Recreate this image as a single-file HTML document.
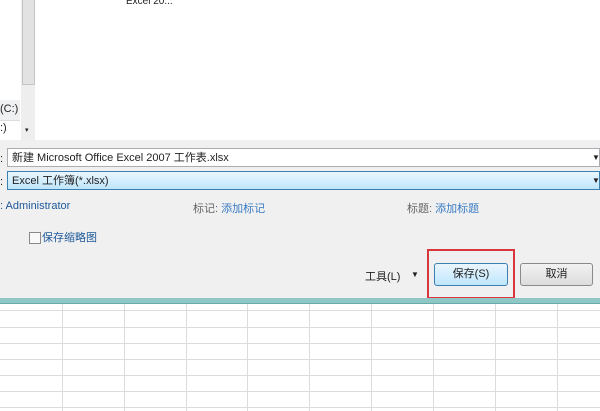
<!DOCTYPE html>
<html><head><meta charset="utf-8"><style>
body{margin:0;width:600px;height:411px;overflow:hidden;position:relative;background:#fff;font-family:"Liberation Sans","Noto Sans CJK SC",sans-serif;font-size:11px;color:#222}
.a{position:absolute}
</style></head><body>
<div class="a" style="left:0;top:0;width:22px;height:140px;background:#fff"></div>
<div class="a" style="left:0;top:100px;width:20px;height:20px;background:#eef0f2;border-bottom:1px solid #ddd"></div>
<div class="a" style="left:0;top:103px;font-size:11px">(C:)</div>
<div class="a" style="left:0;top:122px;font-size:11px">:)</div>
<div class="a" style="left:21px;top:0;width:14px;height:140px;background:#eeeeee"></div>
<div class="a" style="left:22px;top:0;width:11px;height:84px;background:#e2e2e2;border:1px solid #c4c4c4;border-top:none"></div>
<div class="a" style="left:25px;top:126px;font-size:7px">▾</div>
<div class="a" style="left:126px;top:-4px;font-size:10px">Excel 20...</div>
<div class="a" style="left:0;top:140px;width:600px;height:158px;background:#f0f0f0"></div>
<div class="a" style="left:0;top:153px">:</div>
<div class="a" style="left:7px;top:148px;width:593px;height:19px;background:#fff;border:1px solid #abadb3;box-sizing:border-box;padding:3px 4px 0;font-size:11px;line-height:13px">新建 Microsoft Office Excel 2007 工作表.xlsx</div>
<div class="a" style="left:592px;top:153px;font-size:8px">▼</div>
<div class="a" style="left:0;top:176px">:</div>
<div class="a" style="left:7px;top:171px;width:593px;height:19px;background:linear-gradient(#eaf6fd,#bee6fd);border:1px solid #3c7fb1;box-sizing:border-box;padding:3px 4px 0;font-size:11px;line-height:13px">Excel 工作簿(*.xlsx)</div>
<div class="a" style="left:592px;top:176px;font-size:8px">▼</div>
<div class="a" style="left:0;top:200px;color:#1e5a9a">: Administrator</div>
<div class="a" style="left:193px;top:200px;color:#666">标记: <span style="color:#3a7cc4">添加标记</span></div>
<div class="a" style="left:407px;top:200px;color:#666">标题: <span style="color:#3a7cc4">添加标题</span></div>
<div class="a" style="left:29px;top:232px;width:10px;height:10px;border:1px solid #888;background:#f8f8f8"></div>
<div class="a" style="left:42px;top:229px;color:#1e5a9a">保存缩略图</div>
<div class="a" style="left:365px;top:268px">工具(L)</div>
<div class="a" style="left:411px;top:270px;font-size:8px">▼</div>
<div class="a" style="left:427px;top:249px;width:88px;height:50px;border:2px solid #d9363e;box-sizing:border-box"></div>
<div class="a" style="left:434px;top:263px;width:74px;height:23px;border:1px solid #3c7fb1;border-radius:3px;background:linear-gradient(#eaf6fd,#bee6fd);box-sizing:border-box;text-align:center;line-height:21px">保存(S)</div>
<div class="a" style="left:520px;top:263px;width:73px;height:23px;border:1px solid #8a8a8a;border-radius:3px;background:linear-gradient(#f2f2f2,#dcdcdc);box-sizing:border-box;text-align:center;line-height:21px">取消</div>
<div class="a" style="left:0;top:298px;width:600px;height:5px;background:#8fc6c6;border-bottom:1px solid #6aa"></div>
<svg class="a" style="left:0;top:304px" width="600" height="107">
<g stroke="#dcdcdc" stroke-width="1">
<line x1="62.5" y1="0" x2="62.5" y2="107"/><line x1="124.5" y1="0" x2="124.5" y2="107"/><line x1="186.5" y1="0" x2="186.5" y2="107"/><line x1="247.5" y1="0" x2="247.5" y2="107"/><line x1="309.5" y1="0" x2="309.5" y2="107"/><line x1="371.5" y1="0" x2="371.5" y2="107"/><line x1="433.5" y1="0" x2="433.5" y2="107"/><line x1="495.5" y1="0" x2="495.5" y2="107"/><line x1="557.5" y1="0" x2="557.5" y2="107"/>
<line x1="0" y1="6.5" x2="600" y2="6.5"/><line x1="0" y1="23.5" x2="600" y2="23.5"/><line x1="0" y1="39.5" x2="600" y2="39.5"/><line x1="0" y1="55.5" x2="600" y2="55.5"/><line x1="0" y1="71.5" x2="600" y2="71.5"/><line x1="0" y1="87.5" x2="600" y2="87.5"/><line x1="0" y1="103.5" x2="600" y2="103.5"/>
</g></svg>
</body></html>
